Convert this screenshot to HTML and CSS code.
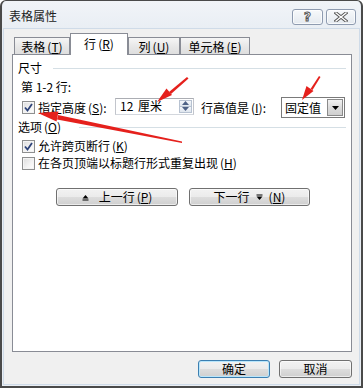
FILE: index.html
```html
<!DOCTYPE html>
<html lang="zh-CN">
<head>
<meta charset="utf-8">
<title>表格属性</title>
<link rel="stylesheet" href="styles.css">
</head>
<body>
<div class="window">
  <div class="titlebar">
    <span class="title">表格属性</span>
    <div class="caption-btns">
      <span class="cap-btn help">?</span>
      <span class="cap-btn close">
        <svg width="14" height="10" viewBox="0 0 14 10"><path d="M2 1 L12 9 M12 1 L2 9" stroke="#555" stroke-width="3.2" stroke-linecap="square"/><path d="M2 1 L12 9 M12 1 L2 9" stroke="#fff" stroke-width="1.4" stroke-linecap="square"/></svg>
      </span>
    </div>
  </div>
  <div class="client">
    <div class="tabs">
      <div class="tab t1">表格<span class="acc">(<u>T</u>)</span></div>
      <div class="tab active t2">行<span class="acc">(<u>R</u>)</span></div>
      <div class="tab t3">列<span class="acc">(<u>U</u>)</span></div>
      <div class="tab t4">单元格<span class="acc">(<u>E</u>)</span></div>
    </div>
    <div class="page">
      <div class="group g1"><span>尺寸</span><i class="sep s1"></i></div>
      <div class="rowlabel">第 1-2 行:</div>
      <div class="row hrow">
        <span class="cb"><svg width="11" height="11" viewBox="0 0 11 11"><path d="M2 5.5 L4.5 8.5 L9 2" fill="none" stroke="#2e4379" stroke-width="1.8"/></svg></span>
        <span class="lbl lbl-h">指定高度<span class="acc">(<u>S</u>)</span>:</span>
        <div class="spin-input">
          <span class="val">12 厘米</span>
          <div class="spin">
            <span class="sp up"><svg width="7" height="4" viewBox="0 0 7 4"><path d="M0 4 L3.5 0 L7 4Z" fill="#4d6185"/></svg></span>
            <span class="sp dn"><svg width="7" height="4" viewBox="0 0 7 4"><path d="M0 0 L3.5 4 L7 0Z" fill="#4d6185"/></svg></span>
          </div>
        </div>
        <span class="lbl lbl-r">行高值是<span class="acc">(<u>I</u>)</span>:</span>
        <div class="combo">
          <span class="val">固定值</span>
          <span class="drop"><svg width="7" height="4" viewBox="0 0 7 4"><path d="M0 0 L3.5 4 L7 0Z" fill="#000"/></svg></span>
        </div>
      </div>
      <div class="group g2"><span>选项<span class="acc">(<u>O</u>)</span></span><i class="sep s2"></i></div>
      <div class="row opt o1">
        <span class="cb"><svg width="11" height="11" viewBox="0 0 11 11"><path d="M2 5.5 L4.5 8.5 L9 2" fill="none" stroke="#2e4379" stroke-width="1.8"/></svg></span>
        <span class="lbl">允许跨页断行<span class="acc">(<u>K</u>)</span></span>
      </div>
      <div class="row opt o2">
        <span class="cb"></span>
        <span class="lbl">在各页顶端以标题行形式重复出现<span class="acc">(<u>H</u>)</span></span>
      </div>
      <div class="row navrow">
        <button class="btn nav prev"><svg width="7" height="7" viewBox="0 0 7 7"><path d="M0.5 4.5 L3.5 1 L6.5 4.5Z" fill="#000"/><rect x="0.5" y="5.5" width="6" height="1" fill="#000"/></svg><span>上一行<span class="acc">(<u>P</u>)</span></span></button>
        <button class="btn nav next"><span>下一行</span><svg width="7" height="7" viewBox="0 0 7 7"><rect x="0.5" y="0.5" width="6" height="1" fill="#000"/><path d="M0.5 2.5 L3.5 6 L6.5 2.5Z" fill="#000"/></svg><span>(<u>N</u>)</span></button>
      </div>
    </div>
    <div class="dlg-btns">
      <button class="btn ok">确定</button>
      <button class="btn cancel">取消</button>
    </div>
  </div>
</div>
<svg class="annot" width="363" height="391" viewBox="0 0 363 391">
  <g fill="#e5201c" stroke="none">
    <path d="M187 77 L188.5 78.5 L171 94 L169 92 Z"/>
    <path d="M157 102 L166.5 88.5 L172 95 Z"/>
    <path d="M319 76 L320.5 77 L312.5 90 L310.5 89 Z"/>
    <path d="M302 100 L306.5 86 L313.5 91 Z"/>
    <path d="M182 141.5 L182 143 L57 119.5 L58 115 Z"/>
    <path d="M38 113 L58.5 111.5 L56.5 121.5 Z"/>
  </g>
</svg>
</body>
</html>
```

FILE: styles.css
```css
html, body {
  margin: 0;
  padding: 0;
  background: #ffffff;
}
body {
  width: 363px;
  height: 391px;
  position: relative;
  overflow: hidden;
  font-family: "Noto Sans CJK SC", "Noto Sans", sans-serif;
  font-size: 12px;
  color: #000;
}
u { text-decoration: underline; text-underline-offset: 1px; }
.acc { margin-left: 2px; }

.window {
  box-sizing: border-box;
  width: 363px;
  height: 388px;
  border-style: solid;
  border-color: #4a4a4a;
  border-width: 1px 2px 2px 2px;
  border-radius: 6px 6px 0 0;
  background: #e9eef4;
  display: flex;
  flex-direction: column;
  padding: 0 1px 1px 1px;
}

.titlebar {
  height: 27px;
  flex: none;
  display: flex;
  align-items: flex-start;
  justify-content: space-between;
  padding: 0 4px 0 6px;
  background: linear-gradient(#f1f4f8, #e9eef4);
  border-radius: 5px 5px 0 0;
}
.title {
  margin-top: 7px;
  line-height: 16px;
  font-size: 12px;
  color: #222;
}
.caption-btns {
  display: flex;
  gap: 3px;
  margin-top: 8px;
}
.cap-btn {
  box-sizing: border-box;
  height: 16px;
  border: 1px solid #8e9bb0;
  border-radius: 3px;
  background: linear-gradient(#f7f9fb, #e4e9ef);
  display: flex;
  align-items: center;
  justify-content: center;
  box-shadow: inset 0 0 0 1px rgba(255,255,255,0.7);
}
.help {
  width: 31px;
  font-family: "DejaVu Sans", sans-serif;
  font-weight: bold;
  font-size: 12px;
  line-height: 12px;
  color: #fff;
  -webkit-text-stroke: 1px #555;
}
.close { width: 30px; }

.client {
  flex: 1;
  background: #f0f0f0;
  border: 1px solid #cfdbe8;
  display: flex;
  flex-direction: column;
  padding-top: 4px;
}

.tabs {
  height: 21px;
  flex: none;
  display: flex;
  align-items: flex-end;
  padding-left: 10px;
}
.tab {
  box-sizing: border-box;
  height: 17px;
  border: 1px solid #898c95;
  border-bottom: none;
  background: linear-gradient(#f6f6f6, #e8e8e8 50%, #dedede);
  display: flex;
  align-items: center;
  justify-content: center;
  padding-top: 2px;
  line-height: 14px;
  white-space: nowrap;
}
.tab.active {
  height: 22px;
  margin-bottom: -1px;
  background: #ffffff;
  position: relative;
  z-index: 1;
  padding-top: 0;
  padding-bottom: 2px;
}
.t1 { width: 56px; }
.t2 { width: 58px; }
.t3 { width: 52px; }
.t4 { width: 70px; }

.page {
  box-sizing: border-box;
  height: 298px;
  flex: none;
  margin: 0 7px 0 8px;
  background: #ffffff;
  border: 1px solid #898c95;
  display: flex;
  flex-direction: column;
  padding: 0 5px 0 5px;
}

.group {
  height: 14px;
  display: flex;
  align-items: center;
  line-height: 14px;
  white-space: nowrap;
}
.g1 { margin-top: 6px; }
.g2 { margin-top: 2px; }
.sep {
  flex: 1;
  height: 1px;
  background: #d5dfe5;
}
.s1 { margin-left: 11px; }
.s2 { margin-left: 18px; }

.rowlabel {
  margin-top: 5px;
  height: 14px;
  line-height: 14px;
  padding-left: 3px;
}

.row {
  display: flex;
  align-items: center;
  white-space: nowrap;
}
.hrow {
  margin-top: 3px;
  height: 21px;
  padding-left: 4px;
}
.cb {
  box-sizing: border-box;
  width: 13px;
  height: 13px;
  flex: none;
  border: 1px solid #8e8f8f;
  background: linear-gradient(135deg, #dcdcdc, #f4f4f4 60%, #ffffff);
  box-shadow: inset 0 0 0 1px #f4f4f4;
  display: flex;
  align-items: center;
  justify-content: center;
}
.lbl {
  margin-left: 3px;
  line-height: 14px;
}
.lbl-h { width: 77px; }
.lbl-r { width: 80px; margin-left: 7px; }

.spin-input {
  box-sizing: border-box;
  width: 79px;
  height: 17px;
  margin-top: -3px;
  border: 1px solid #a3a6ad;
  border-color: #abadb3 #c2c5cc #d3d7dd #c2c5cc;
  background: #fff;
  display: flex;
  align-items: center;
  justify-content: space-between;
  padding: 0 1px 0 4px;
}
.spin-input .val { line-height: 14px; word-spacing: 2px; }
.spin {
  width: 13px;
  height: 13px;
  display: flex;
  flex-direction: column;
}
.sp {
  box-sizing: border-box;
  flex: 1;
  border: 1px solid #b7c2d1;
  background: linear-gradient(#f3f6fa, #dfe6ee);
  display: flex;
  align-items: center;
  justify-content: center;
}
.sp.up { border-bottom: none; }

.combo {
  box-sizing: border-box;
  width: 64px;
  height: 21px;
  border: 1px solid #7a7a7a;
  background: #fff;
  display: flex;
  align-items: center;
  justify-content: space-between;
  padding: 0 1px 0 3px;
}
.combo .val { line-height: 14px; }
.drop {
  box-sizing: border-box;
  width: 16px;
  height: 17px;
  border: 1px solid #8a8a8a;
  background: linear-gradient(#f2f2f2, #dcdcdc 50%, #cfcfcf);
  display: flex;
  align-items: center;
  justify-content: center;
}

.opt {
  height: 14px;
  padding-left: 4px;
}
.o1 { margin-top: 5px; }
.o2 { margin-top: 3px; }

.btn {
  box-sizing: border-box;
  height: 18px;
  margin: 0;
  padding: 0;
  font-family: "Noto Sans CJK SC", "Noto Sans", sans-serif;
  font-size: 12px;
  color: #000;
  border: 1px solid #707070;
  border-radius: 3px;
  background: linear-gradient(#f2f2f2, #ebebeb 50%, #dddddd 51%, #cfcfcf);
  box-shadow: inset 0 0 0 1px rgba(255,255,255,0.6);
  display: flex;
  align-items: center;
  justify-content: center;
  line-height: 14px;
  white-space: nowrap;
}
.navrow {
  margin-top: 18px;
  height: 18px;
  padding-left: 38px;
  gap: 11px;
}
.nav.prev { width: 122px; gap: 10px; }
.nav.next { width: 121px; gap: 6px; }

.dlg-btns {
  display: flex;
  justify-content: flex-end;
  gap: 9px;
  margin-top: 8px;
  padding-right: 7px;
}
.ok {
  width: 72px;
  border-color: #3c7fb1;
  box-shadow: inset 0 0 0 1px #b9e6fb;
}
.cancel { width: 73px; }

.annot {
  position: absolute;
  left: 0;
  top: 0;
  pointer-events: none;
}
```
